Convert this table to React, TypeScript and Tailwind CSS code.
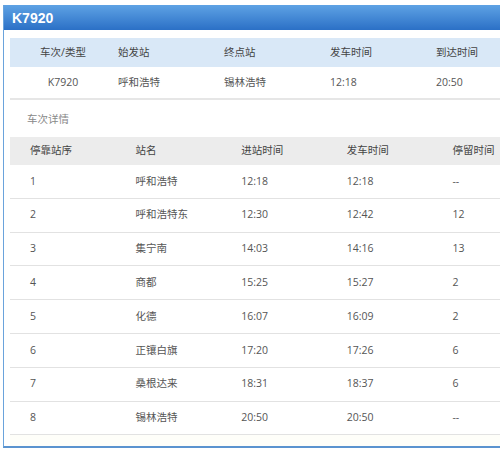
const summaryHead = ['车次/类型', '始发站', '终点站', '发车时间', '到达时间'];
const summaryRow = ['K7920', '呼和浩特', '锡林浩特', '12:18', '20:50'];

const stopHead = ['停靠站序', '站名', '进站时间', '发车时间', '停留时间'];
const stops = [
  ['1', '呼和浩特', '12:18', '12:18', '--'],
  ['2', '呼和浩特东', '12:30', '12:42', '12'],
  ['3', '集宁南', '14:03', '14:16', '13'],
  ['4', '商都', '15:25', '15:27', '2'],
  ['5', '化德', '16:07', '16:09', '2'],
  ['6', '正镶白旗', '17:20', '17:26', '6'],
  ['7', '桑根达来', '18:31', '18:37', '6'],
  ['8', '锡林浩特', '20:50', '20:50', '--'],
];

export default function App() {
  return (
    <div
      className="w-[500px] h-[453px] overflow-hidden bg-white pt-[5px] pl-[3px]"
      style={{ fontFamily: '"Open Sans", "Noto Sans CJK SC", sans-serif' }}
    >
      <div className="w-[548px] h-[443px] border border-[#6aa3dc] border-t-0 border-b-2 border-b-[#5b93cf] bg-white flex flex-col">
        {/* title bar */}
        <div className="h-[25px] shrink-0 bg-gradient-to-b from-[#5ea2e4] to-[#2b70c6] flex items-center pl-[8px]">
          <span
            className="text-white text-[14px] font-bold leading-none"
            style={{ fontFamily: '"Liberation Sans", Arial, sans-serif' }}
          >
            K7920
          </span>
        </div>

        <div className="pl-[6px] pt-[8px] flex-1 flex flex-col">
          {/* summary table */}
          <div className="w-[530px]">
            <div className="grid grid-cols-5 h-[29px] items-center bg-[#d9e8f7] text-[10.5px] text-[#444]">
              {summaryHead.map((h, i) => (
                <div key={i} className={i === 0 ? 'text-center' : 'pl-[2px]'}>
                  {h}
                </div>
              ))}
            </div>
            <div className="grid grid-cols-5 h-[33px] items-center border-b-2 border-[#e6e6e6] text-[10.5px] text-[#555]">
              {summaryRow.map((c, i) => (
                <div key={i} className={i === 0 ? 'text-center' : 'pl-[2px]'}>
                  {c}
                </div>
              ))}
            </div>
          </div>

          <div className="h-[37px] flex items-center pt-[3px] pl-[17px] text-[10.5px] text-[#888]">车次详情</div>

          {/* stops table */}
          <div className="w-[528px]">
            <div className="grid grid-cols-5 h-[28px] items-center bg-[#ececec] text-[10.5px] text-[#444]">
              {stopHead.map((h, i) => (
                <div key={i} className="pl-[20px]">
                  {h}
                </div>
              ))}
            </div>
            {stops.map((row, r) => (
              <div
                key={r}
                className="grid grid-cols-5 h-[33.8px] items-center border-b border-[#e2e2e2] text-[10.5px] text-[#555]"
              >
                {row.map((c, i) => (
                  <div key={i} className="pl-[20px]">
                    {c}
                  </div>
                ))}
              </div>
            ))}
          </div>
          <div className="flex-1 bg-[#fefef9]" />
        </div>
      </div>
    </div>
  );
}
